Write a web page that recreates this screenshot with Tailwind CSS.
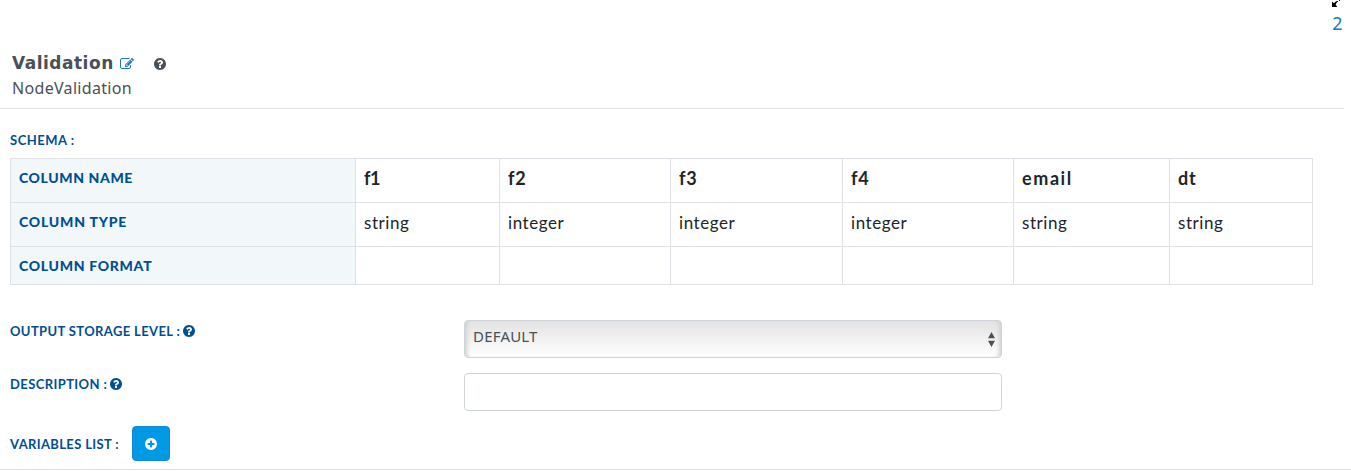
<!DOCTYPE html>
<html lang="en">
<head>
<meta charset="utf-8">
<title>Validation</title>
<script src="https://cdn.jsdelivr.net/npm/@tailwindcss/browser@4"></script>
</head>
<body class="bg-white text-[#212529] font-['Lato',sans-serif] w-[1351px] h-[471px] overflow-hidden">
<svg class="hidden">
  <symbol id="help" viewBox="0 0 1792 1792"><path d="M1024 1376v-192q0-14-9-23t-23-9h-192q-14 0-23 9t-9 23v192q0 14 9 23t23 9h192q14 0 23-9t9-23zm256-672q0-88-55.500-163t-138.500-116-170-41q-243 0-371 213-15 24 8 42l132 100q7 6 19 6 16 0 25-12 53-68 86-92 34-24 86-24 48 0 85.500 26t37.500 59q0 38-20 61t-68 45q-63 28-115.500 86.500t-52.500 125.500v36q0 14 9 23t23 9h192q14 0 23-9t9-23q0-19 21.500-49.500t54.500-49.500q32-18 49-28.500t46-35 44.500-48 28-60.500 12.500-81zm384 192q0 209-103 385.500t-279.500 279.500-385.500 103-385.500-103-279.500-279.500-103-385.500 103-385.500 279.500-279.500 385.500-103 385.500 103 279.500 279.500 103 385.500z"/></symbol>
</svg>
<div class="flex flex-col h-[471px]">
  <header class="w-[1344px] h-[109px] border-b border-[#dee2e6] flex justify-between">
    <div class="pl-3 pt-[52px] text-[#495057]">
      <div class="flex items-center h-[22px]">
        <h1 class="w-[108px] font-['DejaVu_Sans',sans-serif] font-bold text-[17px] leading-[22px] tracking-[0.5px]">Validation</h1>
        <svg class="w-[14px] h-[14px] mt-[2px] mr-[1px] fill-[#1c75bc]" viewBox="0 0 1792 1792"><path d="M888 1184l116-116-152-152-116 116v56h96v96h56zm440-720q-16-16-33 1l-350 350q-17 17-1 33t33-1l350-350q17-17 1-33zm80 594v190q0 119-84.500 203.500t-203.500 84.500h-832q-119 0-203.500-84.500t-84.500-203.500v-832q0-119 84.500-203.500t203.500-84.500h832q63 0 117 25 15 7 18 23 3 17-9 29l-49 49q-14 14-32 8-23-6-45-6h-832q-66 0-113 47t-47 113v832q0 66 47 113t113 47h832q66 0 113-47t47-113v-126q0-13 9-22l64-64q15-15 35-7t20 29zm-96-738l288 288-672 672h-288v-288zm444 132l-92 92-288-288 92-92q28-28 68-28t68 28l152 152q28 28 28 68t-28 68z"/></svg>
        <svg class="w-[14px] h-[14px] ml-[18px] mt-[2px] fill-[#495057]"><use href="#help"/></svg>
      </div>
      <p class="font-['Noto_Sans',sans-serif] text-[16px] leading-[28px] tracking-[0.32px]">NodeValidation</p>
    </div>
    <div class="w-[13px] flex flex-col items-center">
      <svg class="w-[14px] h-[10px]" viewBox="0 0 14 10"><path d="M1 7V1.500L2.800 3.200 4.800 1.500H6.500L4.600 4.600 6.300 7z"/><path d="M5.500 1h1.500v1H5.500zM8 0h1v1H8z"/></svg>
      <span class="font-['Noto_Sans',sans-serif] text-[18px] leading-[26px] text-[#1c75bc]">2</span>
    </div>
  </header>
  <main class="pl-[10px] flex-1 flex flex-col border-b border-[#dee2e6] mb-[1px]">
    <h2 class="mt-[21px] h-[28px] text-[13px] leading-[20px] font-bold tracking-[0.5px] text-[#004f92]">SCHEMA :</h2>
    <table class="w-[1303px] table-fixed border-collapse text-left text-[17px]">
      <colgroup><col class="w-[345px]"><col class="w-[144px]"><col class="w-[171px]"><col class="w-[172px]"><col class="w-[171px]"><col class="w-[156px]"><col class="w-[143px]"></colgroup>
      <tr class="h-[44px] [&>*]:border [&>*]:border-[#dee2e6] [&>*]:px-2 [&>*]:pb-[4px] text-[18px]">
        <th class="bg-[#f2f7fa] text-[14px] font-black tracking-[0.6px] text-[#004f92] pb-[6px]!">COLUMN NAME</th>
        <th class="tracking-[-0.5px]">f1</th><th class="tracking-[0.8px]">f2</th><th class="tracking-[0.8px]">f3</th><th class="tracking-[0.8px]">f4</th><th class="tracking-[1.6px]">email</th><th class="tracking-[0.8px]">dt</th>
      </tr>
      <tr class="h-[44px] [&>*]:border [&>*]:border-[#dee2e6] [&>*]:px-2 [&>*]:pb-[4px] tracking-[0.55px]">
        <th class="bg-[#f2f7fa] text-[14px] font-black tracking-[0.8px] text-[#004f92] pb-[6px]!">COLUMN TYPE</th>
        <td>string</td><td>integer</td><td>integer</td><td>integer</td><td>string</td><td>string</td>
      </tr>
      <tr class="h-[38px] [&>*]:border [&>*]:border-[#dee2e6] [&>*]:px-2 [&>*]:py-0">
        <th class="bg-[#f2f7fa] text-[14px] font-black tracking-[0.7px] text-[#004f92]">COLUMN FORMAT</th>
        <td></td><td></td><td></td><td></td><td></td><td></td>
      </tr>
    </table>
    <div class="mt-[35px] h-[38px] flex">
      <div class="w-[454px] h-[22px] flex items-center gap-[2px] text-[13px] font-bold tracking-[0.37px] text-[#004f92]"><span class="w-[170px] pt-[2px] whitespace-nowrap">OUTPUT STORAGE LEVEL :</span><svg class="w-[14px] h-[14px] fill-[#004f92]"><use href="#help"/></svg></div>
      <div class="w-[538px] h-[38px] rounded border border-[#ced4da] bg-linear-to-b from-[#e3e3e3] to-white shadow-[inset_5px_0_4px_-3px_#d0d0d0,inset_-5px_0_4px_-3px_#d0d0d0] flex justify-between px-2 text-[#495057]">
        <span class="font-['Noto_Sans',sans-serif] text-[15px] leading-[30px] tracking-[0.2px]">DEFAULT</span>
        <svg class="w-[7px] h-[15px] mt-[11px] mr-[-2px] fill-[#495057]" viewBox="0 0 7 15"><path d="M3.500 0 7 6.300H0zM0 8.700h7L3.500 15z"/></svg>
      </div>
    </div>
    <div class="mt-[15px] h-[38px] flex">
      <div class="w-[454px] h-[22px] flex items-center gap-[2px] text-[13px] font-bold tracking-[0.4px] text-[#004f92]"><span class="w-[97px] pt-[2px] whitespace-nowrap">DESCRIPTION :</span><svg class="w-[14px] h-[14px] fill-[#004f92]"><use href="#help"/></svg></div>
      <div class="w-[538px] h-[38px] rounded border border-[#ced4da]"></div>
    </div>
    <div class="mt-[15px] h-[35px] flex items-center text-[13px] font-bold tracking-[0.35px] text-[#004f92]">
      <span class="w-[122px] pt-[2px] whitespace-nowrap">VARIABLES LIST :</span>
      <button class="w-[38px] h-[35px] rounded-[4px] bg-[#0099e5] border border-[#1588d0] flex items-center justify-center"><svg class="w-[14px] h-[14px] fill-white" viewBox="0 0 1792 1792"><path d="M1344 960v-128q0-26-19-45t-45-19h-256v-256q0-26-19-45t-45-19h-128q-26 0-45 19t-19 45v256h-256q-26 0-45 19t-19 45v128q0 26 19 45t45 19h256v256q0 26 19 45t45 19h128q26 0 45-19t19-45v-256h256q26 0 45-19t19-45zm320-64q0 209-103 385.500t-279.500 279.500-385.500 103-385.500-103-279.500-279.500-103-385.500 103-385.500 279.500-279.500 385.500-103 385.500 103 279.500 279.500 103 385.500z"/></svg></button>
    </div>
  </main>
</div>
</body>
</html>
